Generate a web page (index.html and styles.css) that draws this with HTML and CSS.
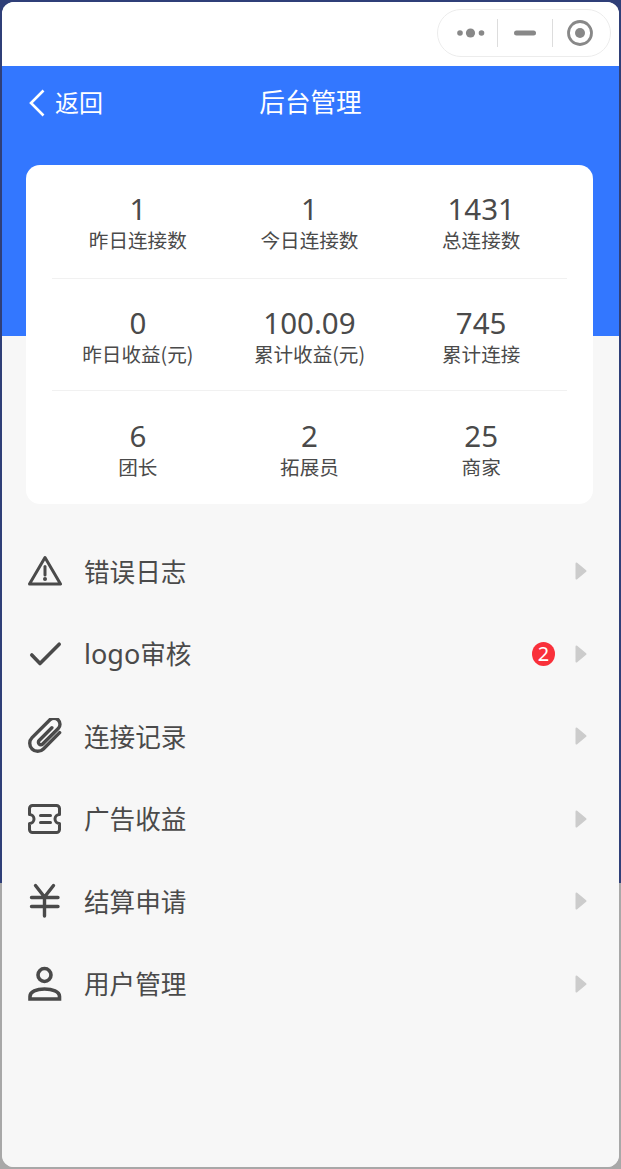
FILE: index.html
```html
<!DOCTYPE html>
<html lang="zh">
<head>
<meta charset="utf-8">
<title>后台管理</title>
<link rel="stylesheet" href="styles.css">
</head>
<body>
<div class="window">
  <div class="titlebar">
    <div class="capsule">
      <div class="cap-btn cap-more">
        <svg width="30" height="12" viewBox="0 0 30 12"><circle cx="4" cy="6" r="2.800" fill="#888"/><circle cx="14.500" cy="6" r="4.600" fill="#888"/><circle cx="25.500" cy="6" r="2.800" fill="#888"/></svg>
      </div>
      <div class="cap-btn cap-min">
        <svg width="24" height="6" viewBox="0 0 24 6"><rect x="1" y="0.500" width="22" height="5" rx="2.500" fill="#888"/></svg>
      </div>
      <div class="cap-btn cap-rec">
        <svg width="28" height="28" viewBox="0 0 28 28"><circle cx="14" cy="14" r="11.500" fill="none" stroke="#888" stroke-width="2.800"/><circle cx="14" cy="14" r="5" fill="#888"/></svg>
      </div>
    </div>
  </div>
  <div class="page">
    <header class="nav">
      <div class="back">
        <svg width="18" height="28" viewBox="0 0 18 28"><path d="M15.500 1.500 3 14l12.500 12.500" fill="none" stroke="#fff" stroke-width="2.600"/></svg>
        <span class="back-text">返回</span>
      </div>
      <h1 class="nav-title">后台管理</h1>
    </header>
    <section class="card">
      <div class="stat-row">
        <div class="stat"><div class="num">1</div><div class="lbl">昨日连接数</div></div>
        <div class="stat"><div class="num">1</div><div class="lbl">今日连接数</div></div>
        <div class="stat"><div class="num">1431</div><div class="lbl">总连接数</div></div>
      </div>
      <div class="stat-row">
        <div class="stat"><div class="num">0</div><div class="lbl">昨日收益(元)</div></div>
        <div class="stat"><div class="num">100.09</div><div class="lbl">累计收益(元)</div></div>
        <div class="stat"><div class="num">745</div><div class="lbl">累计连接</div></div>
      </div>
      <div class="stat-row">
        <div class="stat"><div class="num">6</div><div class="lbl">团长</div></div>
        <div class="stat"><div class="num">2</div><div class="lbl">拓展员</div></div>
        <div class="stat"><div class="num">25</div><div class="lbl">商家</div></div>
      </div>
    </section>
    <nav class="menu">
      <div class="item">
        <svg class="ico" viewBox="0 0 36 36"><path d="M19 4.500 34.500 31H3.500Z" fill="none" stroke="#4a4a4a" stroke-width="3" stroke-linejoin="round"/><path d="M19 13.500v8.500" stroke="#4a4a4a" stroke-width="3" stroke-linecap="round"/><circle cx="19" cy="26" r="2" fill="#4a4a4a"/></svg>
        <span class="name">错误日志</span>
        <span class="arrow-box"><svg width="12" height="18" viewBox="0 0 12 18"><path d="M1.500 1.500 10.500 9 1.500 16.500Z" fill="#ccc" stroke="#ccc" stroke-width="2" stroke-linejoin="round"/></svg></span>
      </div>
      <div class="item">
        <svg class="ico" viewBox="0 0 36 36"><path d="M5.800 19 14 27.500 33.200 8.200" fill="none" stroke="#4a4a4a" stroke-width="3.600" stroke-linecap="round" stroke-linejoin="round"/></svg>
        <span class="name"><span class="latin">logo</span>审核</span>
        <span class="badge">2</span>
        <span class="arrow-box"><svg width="12" height="18" viewBox="0 0 12 18"><path d="M1.500 1.500 10.500 9 1.500 16.500Z" fill="#ccc" stroke="#ccc" stroke-width="2" stroke-linejoin="round"/></svg></span>
      </div>
      <div class="item">
        <svg class="ico" viewBox="0 0 36 36"><path transform="translate(1.500 -0.500) rotate(45 18 18)" d="M26 6V29a8 8 0 0 1-16 0V4a6 6 0 0 1 12 0V26a2.500 2.500 0 0 1-5 0V8" fill="none" stroke="#4a4a4a" stroke-width="3.400" stroke-linecap="round" stroke-linejoin="round"/></svg>
        <span class="name">连接记录</span>
        <span class="arrow-box"><svg width="12" height="18" viewBox="0 0 12 18"><path d="M1.500 1.500 10.500 9 1.500 16.500Z" fill="#ccc" stroke="#ccc" stroke-width="2" stroke-linejoin="round"/></svg></span>
      </div>
      <div class="item">
        <svg class="ico" viewBox="0 0 36 36"><path d="M6.500 4.500H30.500a3 3 0 0 1 3 3V13.500a4.500 4.500 0 0 0 0 9v6a3 3 0 0 1-3 3H6.500a3 3 0 0 1-3-3v-6a4.500 4.500 0 0 0 0-9V7.500a3 3 0 0 1 3-3Z" fill="none" stroke="#4a4a4a" stroke-width="3" stroke-linejoin="round"/><path d="M14.500 14.500h10M14.500 21.500h10" stroke="#4a4a4a" stroke-width="3" stroke-linecap="round"/></svg>
        <span class="name">广告收益</span>
        <span class="arrow-box"><svg width="12" height="18" viewBox="0 0 12 18"><path d="M1.500 1.500 10.500 9 1.500 16.500Z" fill="#ccc" stroke="#ccc" stroke-width="2" stroke-linejoin="round"/></svg></span>
      </div>
      <div class="item">
        <svg class="ico" viewBox="0 0 36 36"><path d="M9.500 2.500 18.500 14 27.500 2.500M18.500 14V33M5.500 14.500h26.500M5.500 23.500h26.500" fill="none" stroke="#4a4a4a" stroke-width="3.400" stroke-linecap="round" stroke-linejoin="round"/></svg>
        <span class="name">结算申请</span>
        <span class="arrow-box"><svg width="12" height="18" viewBox="0 0 12 18"><path d="M1.500 1.500 10.500 9 1.500 16.500Z" fill="#ccc" stroke="#ccc" stroke-width="2" stroke-linejoin="round"/></svg></span>
      </div>
      <div class="item">
        <svg class="ico" viewBox="0 0 36 36"><circle cx="18.500" cy="9" r="6.500" fill="none" stroke="#4a4a4a" stroke-width="3.600"/><path d="M4 33v-2.500c0-5 6.500-7.500 14.500-7.500S33.500 25.500 33.500 30.500V33Z" fill="none" stroke="#4a4a4a" stroke-width="3.600" stroke-linejoin="miter"/></svg>
        <span class="name">用户管理</span>
        <span class="arrow-box"><svg width="12" height="18" viewBox="0 0 12 18"><path d="M1.500 1.500 10.500 9 1.500 16.500Z" fill="#ccc" stroke="#ccc" stroke-width="2" stroke-linejoin="round"/></svg></span>
      </div>
    </nav>
  </div>
</div>
</body>
</html>
```

FILE: styles.css
```css
* { box-sizing: border-box; }
html, body { margin: 0; height: 100%; }
body {
  padding: 2px;
  background: linear-gradient(#2f3f78 0, #2f3f78 883px, #a8a8a8 883px, #a8a8a8 100%);
  font-family: "Noto Sans CJK SC", "Noto Sans", sans-serif;
  color: #4a4a4a;
  overflow: hidden;
}
.window {
  height: 1165px;
  border-radius: 12px;
  overflow: hidden;
  background: #f7f7f7;
  display: flex;
  flex-direction: column;
}
.titlebar {
  height: 64px;
  flex: none;
  background: #fff;
  display: flex;
  justify-content: flex-end;
  align-items: flex-start;
  padding: 7px 8px 0 0;
}
.capsule {
  width: 174px;
  height: 48px;
  border: 1px solid #ececec;
  border-radius: 24px;
  display: flex;
  align-items: center;
}
.cap-btn {
  height: 28px;
  display: flex;
  align-items: center;
  justify-content: center;
}
.cap-more { width: 59px; padding-left: 6px; }
.cap-min { width: 55px; border-left: 1px solid #ddd; }
.cap-rec { width: 58px; padding-right: 4px; border-left: 1px solid #ddd; }
.page {
  flex: 1;
  background: linear-gradient(#3377ff 0, #3377ff 270px, #f7f7f7 270px);
}
.nav {
  height: 74px;
  display: flex;
  align-items: center;
  justify-content: center;
  position: relative;
  color: #fff;
}
.back {
  position: absolute;
  left: 26px;
  top: 0;
  height: 74px;
  display: flex;
  align-items: center;
  gap: 9px;
  font-size: 24px;
}
.back-text { margin-bottom: 4px; }
.nav-title {
  margin: 0 0 6px;
  font-size: 25.6px;
  font-weight: 400;
}
.card {
  margin: 25px 26px 0 24px;
  height: 339px;
  padding: 0 26px;
  background: #fff;
  border-radius: 14px;
  display: flex;
  flex-direction: column;
}
.stat-row {
  height: 113px;
  display: grid;
  grid-template-columns: repeat(3, 1fr);
  align-items: center;
  border-bottom: 1px solid #f1f1f1;
}
.stat-row:first-child { height: 114px; }
.stat-row:last-child { border-bottom: 0; }
.stat { text-align: center; padding-top: 4px; }
.num { font-family: "Noto Sans", sans-serif; font-size: 29.500px; line-height: 34px; }
.lbl { font-size: 19.6px; line-height: 28px; }
.menu {
  margin-top: 26px;
  display: flex;
  flex-direction: column;
}
.item {
  height: 82.500px;
  padding: 0 32px 0 24px;
  display: flex;
  align-items: center;
}
.ico { width: 36px; height: 36px; flex: none; }
.name { margin: 0 0 2px 22px; flex: 1; font-size: 25.6px; }
.latin { font-family: "Noto Sans", sans-serif; font-size: 27px; }
.badge {
  width: 23px;
  height: 24px;
  margin-right: 20px;
  border-radius: 50%;
  background: #f9303a;
  color: #fff;
  font-family: "Noto Sans", sans-serif;
  font-size: 20px;
  line-height: 24px;
  text-align: center;
}
.arrow-box { width: 12px; height: 18px; display: flex; }
```
